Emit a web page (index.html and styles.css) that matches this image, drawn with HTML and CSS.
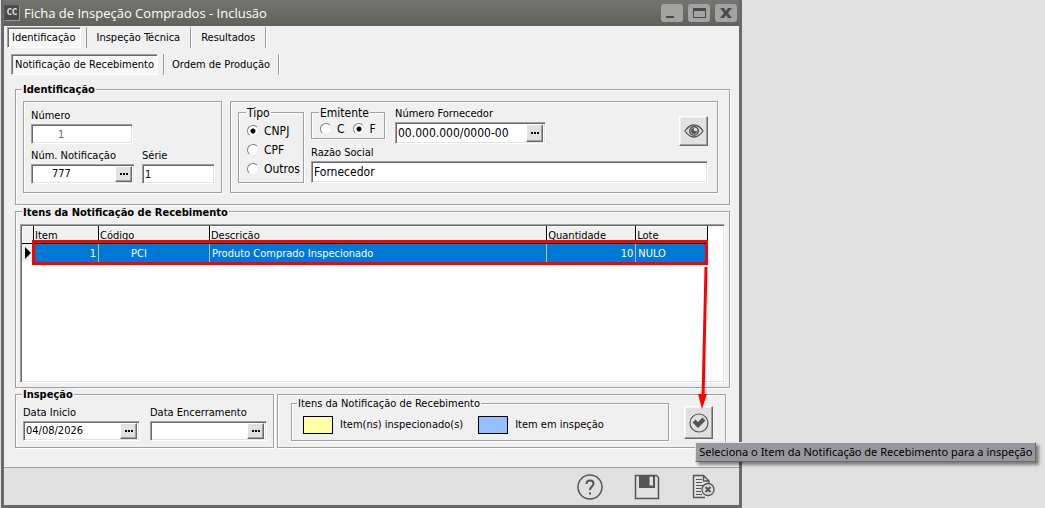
FILE: index.html
```html
<!DOCTYPE html>
<html lang="pt-BR">
<head>
    <meta charset="UTF-8">
    <meta name="viewport" content="width=device-width, initial-scale=1.0">
    <title>Ficha de Inspeção Comprados - Inclusão</title>
    <link rel="stylesheet" href="styles.css">
</head>
<body>
    <div class="window">
        <header class="titlebar">
            <span class="app-icon">CC</span>
            <h1>Ficha de Inspeção Comprados - Inclusão</h1>
            <div class="window-buttons">
                <button type="button" aria-label="Minimizar"><svg width="22" height="18" viewBox="0 0 22 18"><path d="M5 12h8v2H5z" fill="#4a4a4a"/></svg></button>
                <button type="button" aria-label="Maximizar"><svg width="22" height="18" viewBox="0 0 22 18"><path d="M5 4h13v10H5zM6 7v6h11V7z" fill="#4a4a4a" fill-rule="evenodd"/></svg></button>
                <button type="button" aria-label="Fechar"><svg width="22" height="18" viewBox="0 0 22 18"><path d="M5 4h4l2 3 2-3h4l-4 5 4 5h-4l-2-3-2 3H5l4-5z" fill="#4a4a4a"/></svg></button>
            </div>
        </header>

        <nav class="tabs">
            <button type="button" class="tab active">Identificação</button>
            <button type="button" class="tab">Inspeção Técnica</button>
            <button type="button" class="tab">Resultados</button>
        </nav>
        <nav class="tabs subtabs">
            <button type="button" class="tab active">Notificação de Recebimento</button>
            <button type="button" class="tab">Ordem de Produção</button>
        </nav>

        <form class="content">
            <fieldset class="group identification">
                <legend>Identificação</legend>

                <div class="panel notification">
                    <div class="field">
                        <label for="numero">Número</label>
                        <input type="text" id="numero" class="box numero" value="1" disabled>
                    </div>
                    <div class="field-row">
                        <div class="field">
                            <label for="notificacao">Núm. Notificação</label>
                            <div class="box lookup notif-box">
                                <input type="text" id="notificacao" value="777">
                                <button type="button" class="dots" aria-label="Pesquisar notificação"></button>
                            </div>
                        </div>
                        <div class="field">
                            <label for="serie">Série</label>
                            <input type="text" id="serie" class="box serie" value="1">
                        </div>
                    </div>
                </div>

                <div class="panel supplier">
                    <fieldset class="options tipo">
                        <legend>Tipo</legend>
                        <label><input type="radio" name="tipo" checked> CNPJ</label>
                        <label><input type="radio" name="tipo"> CPF</label>
                        <label><input type="radio" name="tipo"> Outros</label>
                    </fieldset>
                    <div class="supplier-data">
                        <div class="supplier-top">
                            <fieldset class="options emitente">
                                <legend>Emitente</legend>
                                <label><input type="radio" name="emitente"> C</label>
                                <label><input type="radio" name="emitente" checked> F</label>
                            </fieldset>
                            <div class="field">
                                <label for="fornecedor">Número Fornecedor</label>
                                <div class="box lookup large supplier-box">
                                    <input type="text" id="fornecedor" value="00.000.000/0000-00">
                                    <button type="button" class="dots" aria-label="Pesquisar fornecedor"></button>
                                </div>
                            </div>
                            <button type="button" class="tool view" aria-label="Visualizar">
                                <svg width="20" height="14" viewBox="0 0 20 14" fill="none" stroke="#555">
                                    <path d="M1 7C4 2.500 7 1 10 1s6 1.500 9 6c-3 4.500-6 6-9 6S4 11.500 1 7z" stroke-width="1.300"/>
                                    <circle cx="10" cy="7" r="4.300" stroke-width="1.600"/>
                                    <path d="M10 4a3 3 0 1 0 3 3h-3z" fill="#555" stroke="none"/>
                                </svg>
                            </button>
                        </div>
                        <div class="field">
                            <label for="razao">Razão Social</label>
                            <input type="text" id="razao" class="box large razao" value="Fornecedor">
                        </div>
                    </div>
                </div>
            </fieldset>

            <section class="group items">
                <h2>Itens da Notificação de Recebimento</h2>
                <div class="grid-box">
                    <table>
                        <thead>
                            <tr>
                                <th class="col-mark"></th>
                                <th class="col-item">Item</th>
                                <th class="col-codigo">Código</th>
                                <th>Descrição</th>
                                <th class="col-qtd">Quantidade</th>
                                <th class="col-lote">Lote</th>
                            </tr>
                        </thead>
                        <tbody>
                            <tr>
                                <td class="mark"><svg width="6" height="12" viewBox="0 0 6 12"><path d="M0 0l6 6-6 6z"/></svg><span class="highlight"></span></td>
                                <td class="num">1</td>
                                <td class="codigo">PCI</td>
                                <td>Produto Comprado Inspecionado</td>
                                <td class="num">10</td>
                                <td>NULO</td>
                            </tr>
                        </tbody>
                    </table>
                </div>
            </section>

            <div class="bottom-row">
                <fieldset class="group inspection">
                    <legend>Inspeção</legend>
                    <div class="field">
                        <label for="inicio">Data Inicio</label>
                        <div class="box lookup date-box">
                            <input type="text" id="inicio" value="04/08/2026">
                            <button type="button" class="dots" aria-label="Escolher data de início"></button>
                        </div>
                    </div>
                    <div class="field">
                        <label for="encerramento">Data Encerramento</label>
                        <div class="box lookup date-box">
                            <input type="text" id="encerramento">
                            <button type="button" class="dots" aria-label="Escolher data de encerramento"></button>
                        </div>
                    </div>
                </fieldset>

                <div class="panel status">
                    <fieldset class="options key">
                        <legend>Itens da Notificação de Recebimento</legend>
                        <span class="key-item"><i class="swatch yellow"></i>Item(ns) inspecionado(s)</span>
                        <span class="key-item"><i class="swatch blue"></i>Item em inspeção</span>
                    </fieldset>
                    <div class="select-item">
                        <button type="button" class="tool check" aria-label="Selecionar item" aria-describedby="tip">
                            <svg width="20" height="20" viewBox="0 0 20 20">
                                <circle cx="10" cy="10" r="9" fill="none" stroke="#555" stroke-width="1.200"/>
                                <path d="M3.500 9.500l3-3L9 9 13.500 4.500l3 3L9 15z" fill="#555"/>
                            </svg>
                        </button>
                        <svg class="arrow" width="12" height="144" viewBox="0 0 12 144">
                            <path d="M8 2L5 133" stroke="#f00" stroke-width="3" fill="none"/>
                            <path d="M0 129h9L4 144z" fill="#f00"/>
                        </svg>
                        <span class="tooltip" role="tooltip" id="tip">Seleciona o Item da Notificação de Recebimento para a inspeção</span>
                    </div>
                </div>
            </div>
        </form>

        <footer class="toolbar">
            <button type="button" aria-label="Ajuda">
                <svg width="26" height="26" viewBox="0 0 26 26" fill="none" stroke="#555">
                    <circle cx="13" cy="13" r="12" stroke-width="1.500"/>
                    <path d="M9.500 10c0-2.300 1.500-3.500 3.500-3.500s3.500 1.300 3.500 3.200c0 2.800-3.500 3-3.500 6.300" stroke-width="2"/>
                    <path d="M12 18.500h2v2h-2z" fill="#555" stroke="none"/>
                </svg>
            </button>
            <button type="button" aria-label="Salvar">
                <svg width="26" height="26" viewBox="0 0 26 26" fill="none" stroke="#555">
                    <path d="M1.500 1.500h21l2 2v21h-23z" stroke-width="1.500"/>
                    <path d="M5 1h16v13H5zM15.500 2.500v9h3.500v-9z" fill="#555" fill-rule="evenodd" stroke="none"/>
                </svg>
            </button>
            <button type="button" aria-label="Cancelar">
                <svg width="24" height="26" viewBox="0 0 24 26" fill="none" stroke="#555">
                    <path d="M18 9V7l-5.500-5.500H2.500v22H14M12.500 1.500V7H18" stroke-width="1.400"/>
                    <path d="M5 5.500h6M5 8.500h6M5 11.500h8M5 14.500h5M5 17.500h5M5 20.500h6"/>
                    <circle cx="17" cy="15.500" r="6" fill="#e1e1e1" stroke-width="1.400"/>
                    <path d="M14.500 13l5 5M19.500 13l-5 5" stroke-width="2.200"/>
                </svg>
            </button>
        </footer>
    </div>
</body>
</html>
```

FILE: styles.css
```css
* {
    box-sizing: border-box;
}

body {
    margin: 0;
    padding-left: 1px;
    background-color: #e1e1e1;
    color: #000;
    font-family: "DejaVu Sans Condensed", "DejaVu Sans", sans-serif;
    font-size: 11px;
    line-height: 14px;
}

button,
input {
    font: inherit;
    color: inherit;
    margin: 0;
    padding: 0;
}

fieldset {
    min-width: 0;
    margin: 0;
    padding: 0;
}

svg {
    display: block;
}

.window {
    display: flex;
    flex-direction: column;
    width: 71%;
    min-width: 720px;
    min-height: 100vh;
    background-color: #f0f0f0;
    border: 3px solid #696969;
    border-top: 0;
}

/* Title bar */
.titlebar {
    display: flex;
    align-items: center;
    height: 26px;
    padding-right: 2px;
    background: linear-gradient(#747470, #62625c);
}

.app-icon {
    width: 16px;
    height: 16px;
    background-color: #4a4a4a;
    border: 1px solid #999;
    border-top-color: #555;
    border-left-color: #555;
    color: #ddd;
    font-size: 8px;
    font-weight: bold;
    line-height: 14px;
    text-align: center;
}

.titlebar h1 {
    flex: 1;
    margin: 0 0 0 4px;
    color: #fff;
    font-family: "Open Sans", sans-serif;
    font-size: 13px;
    font-weight: normal;
    line-height: 20px;
}

.window-buttons {
    display: flex;
    gap: 5px;
}

.window-buttons button {
    width: 22px;
    height: 18px;
    background-color: #a3a3a3;
    border: 0;
    border-radius: 3px;
}

/* Tabs */
.tabs {
    display: flex;
    padding: 1px 3px 0;
}

.tab {
    height: 21px;
    padding: 0 10px;
    background: none;
    border: 0;
    border-right: 1px solid #a0a0a0;
    box-shadow: 1px 0 #fff;
}

.tab.active {
    margin-right: 5px;
    padding: 1px 4px 0;
    background-color: #f7f7f7;
    border: 1px solid;
    border-color: #a0a0a0 #fff #fff #a0a0a0;
    box-shadow: inset 1px 1px #696969;
}

.tab.active + .tab {
    border-left: 1px solid #a0a0a0;
}

.subtabs {
    padding: 6px 7px 0;
}

.subtabs .tab {
    padding: 0 8px;
}

.subtabs .tab.active {
    padding: 1px 3px 0;
}

/* Groups */
.content {
    display: flex;
    flex: 1;
    flex-direction: column;
    padding: 8px 9px 19px 11px;
}

.group,
.panel,
.options {
    border: 1px solid #a0a0a0;
    box-shadow: 1px 1px #fff, inset 1px 1px #fff;
}

legend,
.items h2 {
    padding: 2px 1px 0;
    background-color: #f0f0f0;
    line-height: 10px;
}

.group > legend {
    margin-left: -1px;
    font-weight: bold;
}

.identification {
    display: flex;
    gap: 8px;
    padding: 6px 11px 11px 7px;
}

.field label {
    display: block;
    line-height: 16px;
}

.field-row {
    display: flex;
    gap: 7px;
}

.box {
    display: block;
    height: 20px;
    padding: 2px;
    background-color: #fff;
    border: 1px solid;
    border-color: #a0a0a0 #fff #fff #a0a0a0;
    border-radius: 0;
    box-shadow: inset 1px 1px #696969, inset -1px -1px #e3e3e3;
    outline: 0;
}

.lookup {
    display: flex;
    padding: 1px 2px;
}

.lookup input {
    flex: 1;
    min-width: 0;
    background: none;
    border: 0;
    outline: 0;
}

.large {
    height: 22px;
    font-size: 12px;
}

.dots {
    display: flex;
    align-items: center;
    justify-content: center;
    width: 17px;
    background-color: #e1e1e1;
    border: 1px solid;
    border-color: #fff #696969 #696969 #fff;
    box-shadow: inset -1px -1px #a0a0a0;
}

.dots::before {
    content: "";
    width: 8px;
    height: 2px;
    background: repeating-linear-gradient(90deg, #000 0 2px, transparent 2px 3px);
}

.notification {
    display: flex;
    flex-direction: column;
    gap: 4px;
    width: 199px;
    padding: 6px 7px 8px;
}

.numero {
    width: 102px;
    padding-left: 26px;
    color: #6d6d6d;
}

.notif-box {
    width: 104px;
}

.notif-box input {
    padding-left: 18px;
}

.serie {
    width: 73px;
}

.supplier {
    display: flex;
    flex: 1;
    gap: 7px;
    padding: 4px 9px 9px 7px;
}

.options {
    font-size: 12px;
}

.options > legend {
    margin-left: -1px;
}

.options label {
    display: flex;
    align-items: center;
    gap: 5px;
}

.options input {
    appearance: none;
    width: 12px;
    height: 12px;
    background-color: #fff;
    border: 1px solid;
    border-color: #808080 #e8e8e8 #e8e8e8 #808080;
    border-radius: 50%;
}

.options input:checked {
    background-image: radial-gradient(circle, #000 2px, #fff 3px);
}

.tipo {
    display: flex;
    flex-direction: column;
    gap: 5px;
    width: 66px;
    padding: 6px 0 0 8px;
}

.supplier-data {
    flex: 1;
}

.supplier-top {
    display: flex;
    height: 39px;
}

.emitente {
    display: flex;
    gap: 8px;
    width: 74px;
    height: 33px;
    padding: 2px 0 0 8px;
}

.supplier-top .field {
    margin: 0 auto 0 10px;
}

.supplier-box {
    width: 151px;
}

.tool {
    display: flex;
    align-items: center;
    justify-content: center;
    width: 29px;
    background-color: #e1e1e1;
    border: 1px solid;
    border-color: #fff #696969 #696969 #fff;
    box-shadow: inset -1px -1px #a0a0a0, inset 1px 1px #f0f0f0;
}

.view {
    height: 30px;
    margin-top: 10px;
}

.razao {
    width: 100%;
}

/* Items table */
.items {
    display: flex;
    flex: 1;
    flex-direction: column;
    margin-top: 6px;
    padding: 0 4px 4px;
}

.items h2 {
    align-self: flex-start;
    margin: -6px 0 6px 2px;
    font-size: 11px;
}

.grid-box {
    flex: 1;
    padding: 1px 16px 1px 1px;
    background-color: #fff;
    border: 1px solid;
    border-color: #a0a0a0 #fff #fff #a0a0a0;
    box-shadow: inset 1px 1px #696969, inset -1px -1px #e3e3e3;
}

table {
    width: 100%;
    border-collapse: separate;
    border-spacing: 0;
    table-layout: fixed;
}

th {
    height: 18px;
    padding: 2px 0 0 1px;
    background-color: #f0f0f0;
    border-right: 1px solid #000;
    border-bottom: 1px solid #000;
    box-shadow: inset 1px 1px #fff;
    font-weight: normal;
    text-align: left;
}

.col-mark {
    width: 12px;
}

.col-item {
    width: 65px;
}

.col-codigo {
    width: 111px;
}

.col-qtd {
    width: 89px;
}

.col-lote {
    width: 72px;
}

tbody tr {
    position: relative;
}

td {
    height: 18px;
    padding: 1px 2px 0;
    background-color: #0078d7;
    border-right: 1px solid #c0c0c0;
    color: #fff;
}

td.num {
    text-align: right;
}

td.codigo {
    padding-left: 32px;
}

td.mark {
    padding: 0 0 0 3px;
    background-color: #f0f0f0;
    border-right-color: #000;
}

.highlight {
    position: absolute;
    inset: -4px 0 -3px 10px;
    border: 3px solid #f00;
}

/* Inspection dates and status key */
.bottom-row {
    display: flex;
    gap: 3px;
}

.inspection {
    display: flex;
    gap: 10px;
    width: 259px;
    padding: 5px 6px 6px 7px;
}

.date-box {
    width: 117px;
}

.status {
    display: flex;
    flex: 1;
    justify-content: space-between;
    margin: 6px 4px 0 0;
    padding: 2px 12px 6px 13px;
}

.key {
    display: flex;
    align-items: center;
    gap: 15px;
    width: 378px;
    padding: 0 11px;
    font-size: 11px;
}

.key > legend {
    margin-left: -6px;
}

.key-item {
    display: flex;
    align-items: center;
    gap: 7px;
}

.swatch {
    width: 30px;
    height: 18px;
    border: 1px solid #000;
}

.yellow {
    background-color: #ffffa6;
}

.blue {
    background-color: #96bfff;
}

.select-item {
    position: relative;
    padding-top: 9px;
}

.check {
    height: 33px;
}

.arrow {
    position: absolute;
    right: 3px;
    bottom: 32px;
    pointer-events: none;
}

.tooltip {
    position: absolute;
    top: 45px;
    left: 11px;
    z-index: 1;
    padding: 0 3px;
    background-color: #98979f;
    border: 1px solid;
    border-color: #e3e3e3 #696969 #696969 #e3e3e3;
    box-shadow: 3px 3px 3px rgba(0, 0, 0, 0.45);
    font-family: "Noto Sans", sans-serif;
    font-size: 11px;
    line-height: 18px;
    white-space: nowrap;
}

/* Bottom toolbar */
.toolbar {
    display: flex;
    justify-content: flex-end;
    gap: 31px;
    height: 38px;
    padding: 6px 24px 0;
    background-color: #e1e1e1;
    border-top: 1px solid #a0a0a0;
}

.toolbar button {
    height: 26px;
    background: none;
    border: 0;
}
```
